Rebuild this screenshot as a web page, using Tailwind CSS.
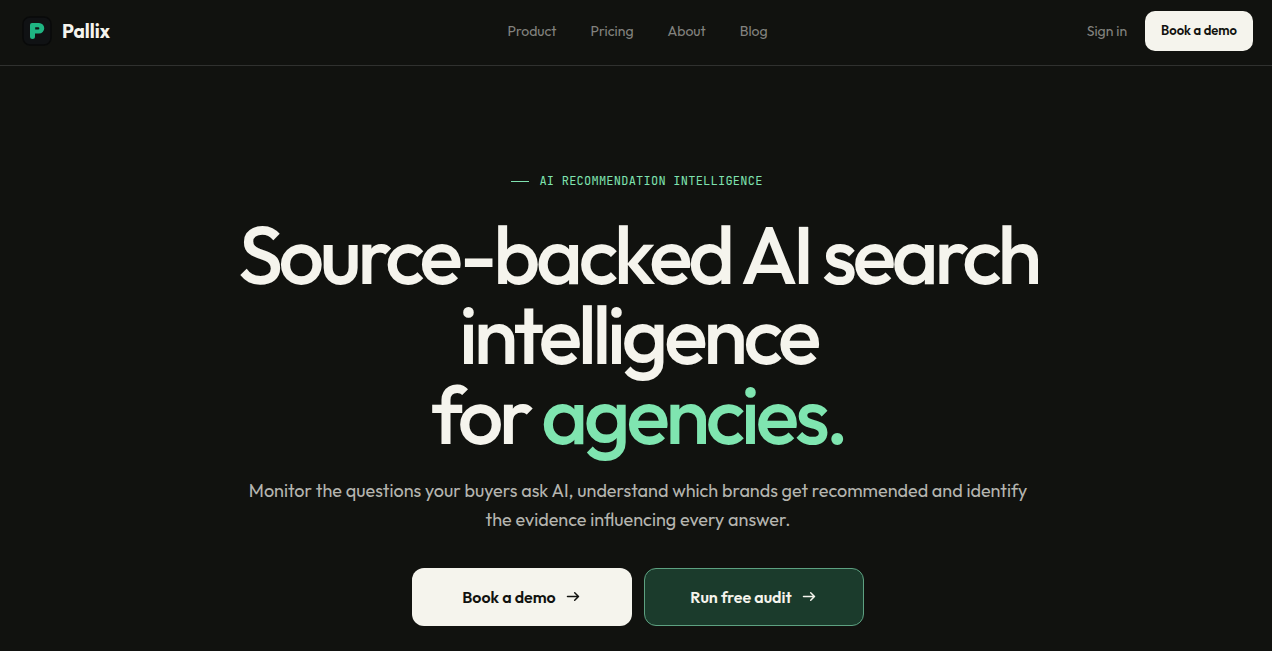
<!DOCTYPE html>
<html lang="en">
<head>
<meta charset="utf-8">
<meta name="viewport" content="width=device-width, initial-scale=1">
<title>Pallix</title>
<script src="https://cdn.jsdelivr.net/npm/@tailwindcss/browser@4"></script>
</head>
<body class="min-h-screen overflow-x-hidden bg-[#11120f] font-[Outfit,Lato,sans-serif] text-[#f5f4ed]">
<header class="border-b border-[#30312f]">
  <div class="grid h-[65px] grid-cols-[1fr_auto_1fr] items-center pr-[19px] pb-1 pl-[22px]">
    <a href="#" class="flex items-center gap-[10px] text-[19px] leading-[30px] font-bold">
      <svg class="size-[30px]" viewBox="0 0 30 30" aria-hidden="true">
        <rect x="1" y="1" width="28" height="28" rx="7" fill="#101214" stroke="#090a0a" stroke-width="1.5"/>
        <path fill-rule="evenodd" fill="#1fb583" d="M10 7H17A4.700 4.700 0 0 1 17 17.500H13V20.600A2.400 2.400 0 0 1 8 20.600V9A2 2 0 0 1 10 7ZM13.200 11.300V13.600H16.200A1.150 1.150 0 0 0 16.200 11.300Z"/>
      </svg>
      Pallix
    </a>
    <nav aria-label="Main" class="flex gap-[34px] pt-px text-sm text-[#83837f]">
      <a href="#">Product</a>
      <a href="#">Pricing</a>
      <a href="#">About</a>
      <a href="#">Blog</a>
    </nav>
    <div class="flex items-center justify-end gap-[18px]">
      <a href="#" class="pt-px text-sm text-[#83837f]">Sign in</a>
      <button type="button" class="h-10 rounded-[10px] bg-[#f5f4ed] px-4 text-[13px] font-semibold text-[#11120f]">Book a demo</button>
    </div>
  </div>
</header>
<main class="flex flex-col items-center pt-[107px] pr-6 pl-7 text-center">
  <p class="flex items-center gap-[10px] pr-0.5 font-['JetBrains_Mono','DejaVu_Sans_Mono',monospace] text-xs leading-4 tracking-[0.02em] text-[#7fe3b0]">
    <span class="h-px w-[18px] bg-[#7fe3b0]" aria-hidden="true"></span>AI RECOMMENDATION INTELLIGENCE
  </p>
  <h1 class="mt-[25px] max-w-[860px] text-[81px] leading-[80px] font-medium tracking-[-0.052em]">Source-backed AI search intelligence<br>for <span class="text-[#7fe5b0]">agencies.</span></h1>
  <p class="mt-[22px] max-w-[800px] text-lg leading-[29px] text-[#b5b5af]">Monitor the questions your buyers ask AI, understand which brands get recommended and identify the evidence influencing every answer.</p>
  <div class="mt-[34px] flex flex-wrap justify-center gap-3 pb-6">
    <button type="button" class="flex h-[58px] w-[220px] items-center justify-center gap-[10px] rounded-xl bg-[#f5f4ed] pr-0.5 text-base font-semibold text-[#11120f]">Book a demo
      <svg class="size-[14px]" viewBox="0 0 14 14" fill="none" stroke="currentColor" stroke-width="1.500" stroke-linecap="round" stroke-linejoin="round" aria-hidden="true"><path d="M1.500 6.500H12.500M8.700 2.700L12.500 6.500L8.700 10.300"/></svg>
    </button>
    <button type="button" class="flex h-[58px] w-[220px] items-center justify-center gap-[10px] rounded-xl border border-[#5da181] bg-[#1b3b2c] pr-0.5 text-base font-semibold">Run free audit
      <svg class="size-[14px]" viewBox="0 0 14 14" fill="none" stroke="currentColor" stroke-width="1.500" stroke-linecap="round" stroke-linejoin="round" aria-hidden="true"><path d="M1.500 6.500H12.500M8.700 2.700L12.500 6.500L8.700 10.300"/></svg>
    </button>
  </div>
</main>
</body>
</html>
